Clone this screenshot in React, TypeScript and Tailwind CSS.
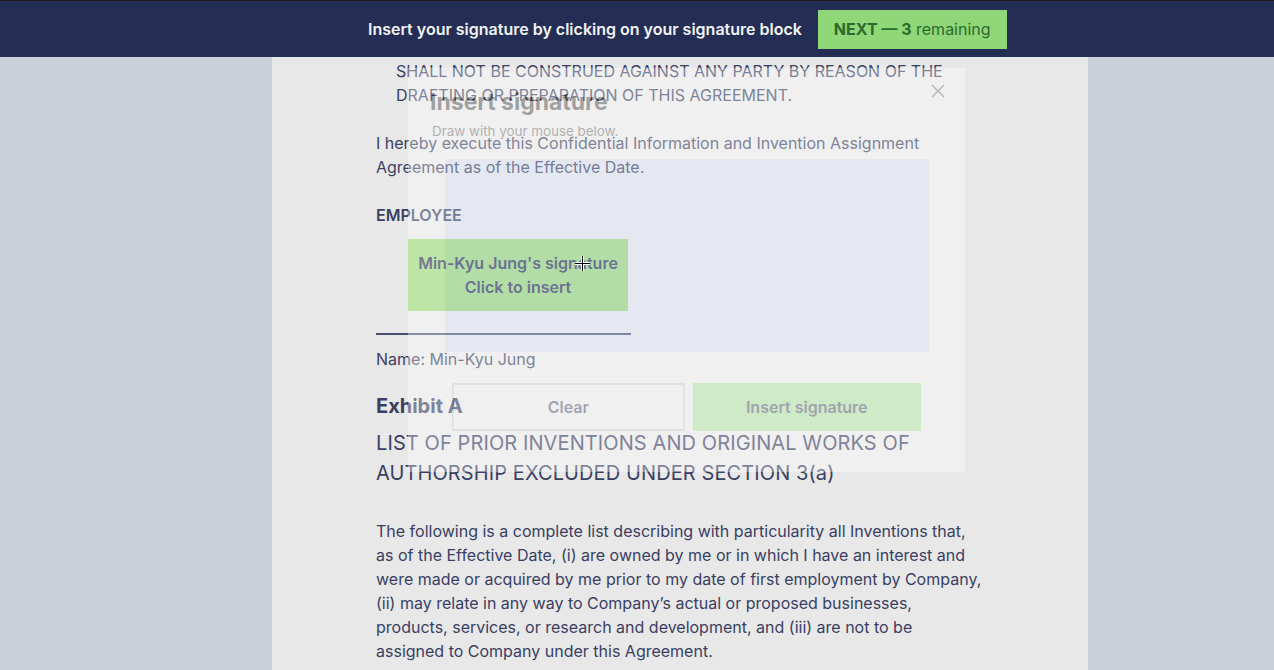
import React from 'react';

const ink = 'text-[#394064]';

const SignatureModal: React.FC = () => {
    return (
        <div className="absolute left-[408px] top-[68px] w-[557px] h-[404px] bg-white opacity-[0.35] flex flex-col pointer-events-none">
            <div className="flex justify-between items-start pl-[22px] pr-[20px] pt-[18px]">
                <div>
                    <h3 className="text-[23px] leading-[32px] font-bold text-[#1c1c1c]">Insert signature</h3>
                    <p className="mt-[4px] pl-[2px] text-[13.4px] leading-[18px] text-[#4a4a4a]">Draw with your mouse below.</p>
                </div>
                <svg width="14" height="14" viewBox="0 0 14 14" className="-mt-[2px]">
                    <path d="M1 1 L13 13 M13 1 L1 13" stroke="#555" strokeWidth="1.4" fill="none" />
                </svg>
            </div>
            <div className="mx-auto mt-[19px] w-[484px] h-[193px] bg-[#e0eaff]"></div>
            <div className="mx-auto mt-[31px] w-[469px] flex gap-2">
                <button className="flex-1 h-[48px] border-2 border-[#d9d9d9] bg-white text-[16px] font-semibold text-[#1b2348]">Clear</button>
                <button className="flex-1 h-[48px] bg-[#a2ee8b] text-[16px] font-semibold text-[#1b2348]">Insert signature</button>
            </div>
        </div>
    );
};

export default function App() {
    return (
        <div className="h-screen overflow-hidden flex flex-col bg-[#cbcfd9] relative" style={{ fontFamily: 'Inter, "Noto Sans", sans-serif' }}>
            <header className="h-[57px] shrink-0 bg-[#242e54] border-t border-[#1d1d1f] flex items-center pl-[368px] gap-4">
                <span className="text-[16px] font-semibold text-[#f1f2f6]">Insert your signature by clicking on your signature block</span>
                <button className="h-[39px] px-4 bg-[#8fd778] text-[16px] text-[#2e6a2c]">
                    <span className="font-bold">NEXT — 3</span> remaining
                </button>
            </header>

            <div className="flex-1 flex pl-[272px] overflow-hidden">
                <div className={`w-[816px] bg-[#e8e8e8] px-[104px] pt-[2px] ${ink} text-[16px] leading-[24px]`}>
                    <p className="pl-[20px]">SHALL NOT BE CONSTRUED AGAINST ANY PARTY BY REASON OF THE DRAFTING OR PREPARATION OF THIS AGREEMENT.</p>

                    <p className="mt-[24px]">I hereby execute this Confidential Information and Invention Assignment Agreement as of the Effective Date.</p>

                    <p className="mt-[24px] font-semibold">EMPLOYEE</p>

                    <div className="ml-[32px] mt-[12px] w-[220px] h-[72px] bg-[#9ad776] flex flex-col items-center justify-center text-[16px] leading-[24px] font-semibold text-[#2c3157]">
                        <span>Min-Kyu Jung's signature</span>
                        <span>Click to insert</span>
                    </div>

                    <div className="mt-[22px] w-[255px] h-[2px] bg-[#4a5175]"></div>
                    <p className="mt-[12px]">Name: Min-Kyu Jung</p>

                    <h2 className="mt-[21px] text-[20px] leading-[28px] font-bold">Exhibit A</h2>
                    <h3 className="mt-[8px] text-[20px] leading-[30px] font-normal tracking-[0.1px]">LIST OF PRIOR INVENTIONS AND ORIGINAL WORKS OF AUTHORSHIP EXCLUDED UNDER SECTION 3(a)</h3>

                    <p className="mt-[31px]">
                        The following is a complete list describing with particularity all Inventions that, as of the Effective Date, (i) are owned by me or in which I have an interest and were made or acquired by me prior to my date of first employment by Company, (ii) may relate in any way to Company’s actual or proposed businesses, products, services, or research and development, and (iii) are not to be assigned to Company under this Agreement.
                    </p>
                </div>
            </div>

            <SignatureModal />

            {/* mouse cursor */}
            <svg className="absolute left-[574px] top-[255px] pointer-events-none" width="17" height="17" viewBox="0 0 17 17">
                <path d="M8.5 1 V16 M1 8.5 H16" stroke="#fff" strokeWidth="3" />
                <path d="M8.5 1 V16 M1 8.5 H16" stroke="#000" strokeWidth="1" />
            </svg>
        </div>
    );
}
